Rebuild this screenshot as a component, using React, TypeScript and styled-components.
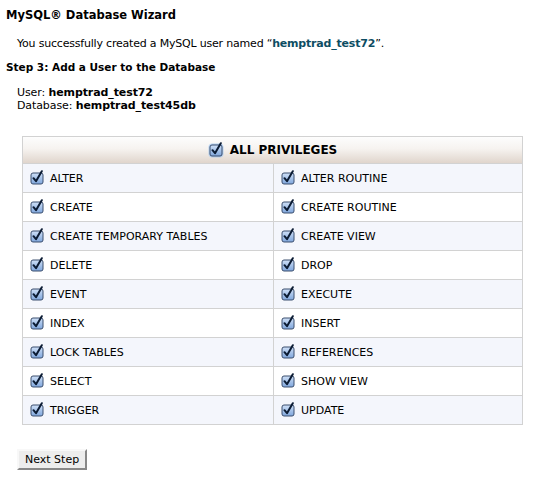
import styled, { createGlobalStyle } from 'styled-components'

const Global = createGlobalStyle`
    body {
        margin: 0;
        background: #fff;
        font-family: "DejaVu Sans", Verdana, sans-serif;
        color: #000;
    }
`

const Page = styled.div`
    padding: 6px 6px 0 6px;
`

const Title = styled.h1`
    margin: 0;
    font-size: 11.5px;
    font-weight: bold;
    line-height: 18px;
`

const Message = styled.p`
    margin: 12px 0 0 11px;
    font-size: 11px;
    letter-spacing: -0.2px;
    line-height: 16px;
    b { color: #0d4d63; }
`

const Step = styled.h2`
    margin: 7px 0 0 0;
    font-size: 10.5px;
    font-weight: bold;
    line-height: 16px;
`

const Info = styled.div`
    margin: 11px 0 0 11px;
    font-size: 11px;
    letter-spacing: -0.1px;
    line-height: 13px;
`

const Table = styled.div`
    margin: 24px 0 0 16px;
    width: 499px;
    border: 1px solid #d2d2d2;
    border-bottom: 0;
    display: grid;
    grid-template-columns: 250px 1fr;
`

const Header = styled.div`
    grid-column: 1 / 3;
    height: 26px;
    border-bottom: 1px solid #d2d2d2;
    background: linear-gradient(#fdfdfd 0%, #f6f3f0 45%, #e0d5cc 100%);
    display: flex;
    align-items: center;
    justify-content: center;
    gap: 6px;
    font-size: 12px;
    font-weight: bold;
`

const Cell = styled.div<{ $alt: boolean; $right: boolean }>`
    height: 28px;
    border-bottom: 1px solid #d2d2d2;
    border-left: ${p => (p.$right ? '1px solid #d2d2d2' : '0')};
    background: ${p => (p.$alt ? '#f4f6fc' : '#fff')};
    display: flex;
    align-items: center;
    gap: 5px;
    padding-left: 6px;
    font-size: 11px;
`

const Button = styled.button`
    margin: 24px 0 0 11px;
    font-family: "DejaVu Sans", Verdana, sans-serif;
    font-size: 11px;
    padding: 0 6px;
    height: 21px;
    background: #ededed;
    border: 2px solid;
    border-color: #f8f8f8 #888 #888 #f8f8f8;
    color: #000;
`

const Check = ({ glow }: { glow?: boolean }) => (
    <svg width="16" height="16" viewBox="0 0 16 16">
        <defs>
            <linearGradient id="cb" x1="0" y1="0" x2="0" y2="1">
                <stop offset="0" stopColor="#cfe0f7" />
                <stop offset="1" stopColor="#7fa6dc" />
            </linearGradient>
        </defs>
        {glow && <rect x="0.5" y="1.5" width="15" height="14" rx="4" fill="#9cc3ef" opacity="0.7" />}
        <rect x="2" y="3" width="12" height="11" rx="2" fill="url(#cb)" stroke="#3b4e6e" strokeWidth="1" />
        <path d="M4.5 8.2 L7 11.2 L12.8 1.2" fill="none" stroke="#0b1b33" strokeWidth="2" strokeLinecap="round" strokeLinejoin="round" />
    </svg>
)

const privileges = [
    ['ALTER', 'ALTER ROUTINE'],
    ['CREATE', 'CREATE ROUTINE'],
    ['CREATE TEMPORARY TABLES', 'CREATE VIEW'],
    ['DELETE', 'DROP'],
    ['EVENT', 'EXECUTE'],
    ['INDEX', 'INSERT'],
    ['LOCK TABLES', 'REFERENCES'],
    ['SELECT', 'SHOW VIEW'],
    ['TRIGGER', 'UPDATE'],
]

export default function App() {
    return (
        <Page>
            <Global />
            <Title>MySQL® Database Wizard</Title>
            <Message>You successfully created a MySQL user named “<b>hemptrad_test72</b>”.</Message>
            <Step>Step 3: Add a User to the Database</Step>
            <Info>
                User: <b>hemptrad_test72</b><br />
                Database: <b>hemptrad_test45db</b>
            </Info>
            <Table>
                <Header><Check glow />ALL PRIVILEGES</Header>
                {privileges.map((row, i) =>
                    row.map((name, j) => (
                        <Cell key={name} $alt={i % 2 === 0} $right={j === 1}>
                            <Check />{name}
                        </Cell>
                    ))
                )}
            </Table>
            <Button>Next Step</Button>
        </Page>
    )
}
